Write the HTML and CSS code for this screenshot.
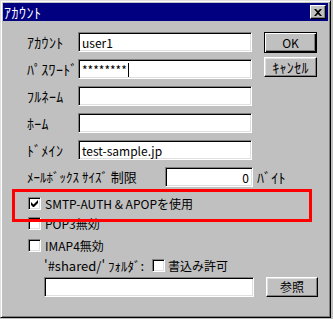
FILE: index.html
```html
<!DOCTYPE html>
<html lang="ja">
<head>
    <meta charset="UTF-8">
    <title>ｱｶｳﾝﾄ</title>
    <link rel="stylesheet" href="styles.css">
</head>
<body>
    <div class="window">
        <div class="titlebar">
            <span class="title">ｱｶｳﾝﾄ</span>
            <span class="close-btn">
                <svg width="8" height="7" viewBox="0 0 8 7"><path d="M0 0h2l2 2 2-2h2L5 3.5 8 7H6L4 5 2 7H0l3-3.5z" fill="#000"/></svg>
            </span>
        </div>

        <div class="dialog">
            <div class="top">
                <div class="fields">
                    <label>ｱｶｳﾝﾄ</label>
                    <div class="field">user1</div>
                    <label>ﾊﾟｽﾜｰﾄﾞ</label>
                    <div class="field">********<span class="caret"></span></div>
                    <label>ﾌﾙﾈｰﾑ</label>
                    <div class="field"></div>
                    <label>ﾎｰﾑ</label>
                    <div class="field"></div>
                    <label>ﾄﾞﾒｲﾝ</label>
                    <div class="field">test-sample.jp</div>
                </div>
                <div class="buttons">
                    <div class="btn btn-default"><span>OK</span></div>
                    <div class="btn btn-kana">ｷｬﾝｾﾙ</div>
                </div>
            </div>

            <div class="size-row">
                <label class="size-label">ﾒｰﾙﾎﾞｯｸｽ ｻｲｽﾞ 制限</label>
                <div class="field field-num">0</div>
                <span class="unit">ﾊﾞｲﾄ</span>
            </div>

            <div class="checks">
                <div class="check-row highlight">
                    <span class="checkbox">
                        <svg width="7" height="7" viewBox="0 0 7 7"><path d="M0 2v3l2 2h1l4-4V0L2.5 4.5z" fill="#000"/></svg>
                    </span>
                    <span>SMTP-AUTH &amp; APOPを使用</span>
                </div>
                <div class="check-row">
                    <span class="checkbox"></span>
                    <span>POP3無効</span>
                </div>
                <div class="check-row">
                    <span class="checkbox"></span>
                    <span>IMAP4無効</span>
                </div>
            </div>

            <div class="shared-row">
                <span class="shared-label">'#shared/' ﾌｫﾙﾀﾞ:</span>
                <span class="checkbox"></span>
                <span>書込み許可</span>
            </div>

            <div class="browse-row">
                <div class="field field-wide"></div>
                <div class="btn btn-browse">参照</div>
            </div>
        </div>
    </div>
</body>
</html>
```

FILE: styles.css
```css
/* Win95 style dialog */
:root {
    --face: #c0c0c0;
    --light: #dfdfdf;
    --shadow: #808080;
    --title: #000080;
}

* {
    margin: 0;
    padding: 0;
    box-sizing: border-box;
}

body {
    background: var(--face);
    font-family: "Noto Sans CJK JP", "DejaVu Sans", sans-serif;
    font-size: 12px;
    line-height: 14px;
    color: #000;
}

.window {
    width: 331px;
    height: 318px;
    background: var(--face);
    border: 1px solid;
    border-color: var(--light) #000 #000 var(--light);
    box-shadow: inset 1px 1px #fff, inset -1px -1px var(--shadow);
    padding: 2px;
}

/* Title bar */
.titlebar {
    height: 18px;
    background: var(--title);
    display: flex;
    align-items: center;
    justify-content: space-between;
    padding: 0 2px 0 1px;
}

.title {
    color: #fff;
    font-size: 14px;
    letter-spacing: 0.5px;
}

.close-btn {
    width: 16px;
    height: 14px;
    background: var(--face);
    border: 1px solid;
    border-color: #fff #000 #000 #fff;
    box-shadow: inset -1px -1px var(--shadow);
    display: flex;
    align-items: center;
    justify-content: center;
}

/* Dialog body */
.dialog {
    padding: 11px 0 0 24px;
}

.top {
    display: flex;
    align-items: flex-start;
}

.fields {
    display: grid;
    grid-template-columns: 51px 174px;
    grid-auto-rows: 20px;
    row-gap: 7px;
    align-items: center;
}

label, .unit, .shared-label, .title, .btn-kana {
    white-space: nowrap;
}

label, .unit, .btn-kana {
    font-size: 14px;
    letter-spacing: 0.3px;
}

/* Sunken edit box */
.field {
    height: 20px;
    background: #fff;
    border: 1px solid;
    border-color: var(--shadow) #fff #fff var(--shadow);
    box-shadow: inset 1px 1px #000, inset -1px -1px var(--light);
    padding: 1px 3px 0;
    white-space: nowrap;
    display: flex;
    align-items: center;
}

.caret {
    display: inline-block;
    width: 1px;
    height: 14px;
    background: #000;
    margin-left: 1px;
}

/* Buttons */
.buttons {
    display: flex;
    flex-direction: column;
    gap: 4px;
    margin-left: 12px;
}

.btn {
    width: 53px;
    height: 21px;
    background: var(--face);
    border: 1px solid;
    border-color: #fff #000 #000 #fff;
    box-shadow: inset -1px -1px var(--shadow), inset 1px 1px var(--light);
    display: flex;
    align-items: center;
    justify-content: center;
}

.btn-default {
    border-color: #000;
    box-shadow: inset 1px 1px #fff, inset -1px -1px #000, inset -2px -2px var(--shadow);
}

.btn-default + .btn {
    height: 20px;
}

.size-row {
    display: flex;
    align-items: center;
    margin-top: 7px;
}

.size-label {
    width: 138px;
    flex: none;
    font-size: 13px;
    letter-spacing: 0;
}

.field-num {
    width: 88px;
    justify-content: flex-end;
}

.unit {
    margin-left: 4px;
}

/* Checkboxes */
.checks {
    display: flex;
    flex-direction: column;
    margin-top: 10px;
    padding-left: 1px;
}

.check-row {
    display: flex;
    align-items: center;
    gap: 4px;
    height: 13px;
    margin-bottom: 9px;
}

.check-row:last-child {
    margin-bottom: 0;
}

/* red annotation frame over the SMTP option */
.highlight {
    position: relative;
    margin-bottom: 7px;
}

.highlight::before {
    content: '';
    position: absolute;
    left: -16px;
    top: -8px;
    width: 294px;
    height: 27px;
    border: 3px solid #f00;
}

.checkbox {
    width: 13px;
    height: 13px;
    flex: none;
    background: #fff;
    border: 1px solid;
    border-color: var(--shadow) #fff #fff var(--shadow);
    box-shadow: inset 1px 1px #000, inset -1px -1px var(--light);
    display: flex;
    align-items: center;
    justify-content: center;
}

.shared-row {
    display: flex;
    align-items: center;
    height: 13px;
    margin-top: 7px;
    padding-left: 17px;
}

.shared-label {
    width: 108px;
    flex: none;
    font-size: 13px;
}

.shared-row .checkbox {
    margin-right: 3px;
}

.browse-row {
    display: flex;
    align-items: center;
    gap: 12px;
    margin-top: 5px;
    padding-left: 17px;
}

.field-wide {
    width: 210px;
}

.btn-browse {
    width: 52px;
    height: 20px;
}
```
